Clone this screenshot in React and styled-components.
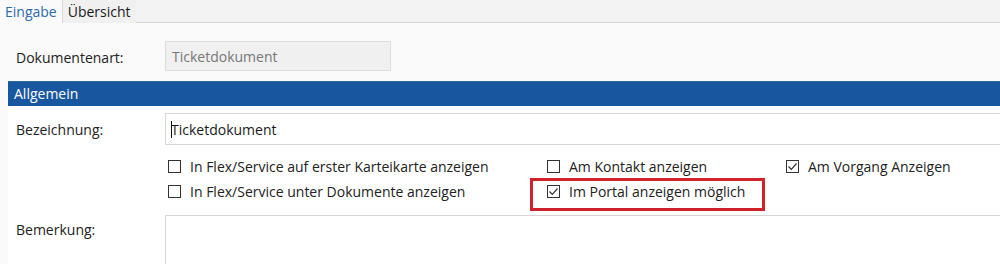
import React from 'react';
import styled, { createGlobalStyle } from 'styled-components';

const Global = createGlobalStyle`
  html, body { margin: 0; padding: 0; background: #fafafa; }
  body { font-family: "Open Sans", "Noto Sans", sans-serif; font-size: 13px; color: #222; }
`;

const Page = styled.div`
  width: 1000px;
  height: 264px;
  overflow: hidden;
  background: #fafafa;
`;

const TabBar = styled.div`
  display: flex;
  height: 23px;
  background: #f3f3f3;
  border-bottom: 1px solid #d4d4d4;
  box-sizing: border-box;
`;

const Tab = styled.div`
  display: flex;
  align-items: center;
  padding: 0 5px;
  font-size: 14px;
  line-height: 1;
  color: ${p => (p.$active ? '#2a6bb0' : '#1a1a1a')};
  background: ${p => (p.$active ? '#fafafa' : '#f0f0f0')};
  border-left: ${p => (p.$active ? 'none' : '1px solid #d8d8d8')};
  height: ${p => (p.$active ? '24px' : '23px')};
  box-sizing: border-box;
`;

const TopRow = styled.div`
  display: flex;
  align-items: center;
  height: 32px;
  margin-top: 17px;
  margin-bottom: -1px;
  padding-left: 16px;
`;

const Label = styled.div`
  width: 149px;
  font-size: 14px;
  line-height: 1;
  color: #222;
  padding-top: ${p => p.$pt || 0}px;
`;

const ReadOnly = styled.div`
  width: 226px;
  height: 30px;
  box-sizing: border-box;
  background: #f0f0f0;
  border: 1px solid #dcdcdc;
  display: flex;
  align-items: center;
  padding: 2px 0 0 6px;
  color: #777;
  font-size: 14px;
  line-height: 1;
`;

const Section = styled.div`
  margin-top: 10px;
  margin-left: 8px;
  background: #ffffff;
`;

const SectionHead = styled.div`
  height: 25px;
  background: #1857a0;
  border-top: 1px solid #2d6a9c;
  box-sizing: border-box;
  color: #fff;
  font-size: 14px;
  line-height: 1;
  display: flex;
  align-items: center;
  padding-left: 6px;
`;

const Row = styled.div`
  display: flex;
  align-items: ${p => (p.$top ? 'flex-start' : 'center')};
  padding-left: 8px;
  margin-top: ${p => p.$mt || 0}px;
`;

const Input = styled.div`
  flex: 1;
  height: ${p => p.$h || 32}px;
  box-sizing: border-box;
  border: 1px solid #d6d6d6;
  border-right: none;
  background: #fff;
  display: flex;
  align-items: center;
  padding: 1px 0 0 5px;
  font-size: 14px;
  line-height: 1;
  color: #1a1a1a;
`;

const Caret = styled.span`
  display: inline-block;
  width: 1px;
  height: 17px;
  background: #111;
  margin-right: -1px;
`;

const Grid = styled.div`
  display: grid;
  grid-template-columns: 379px 239px 1fr;
  grid-auto-rows: 25px;
  margin-left: 160px;
  margin-top: 9px;
`;

const Check = styled.div`
  display: flex;
  align-items: center;
  gap: 9px;
  font-size: 14px;
  line-height: 1;
  color: #222;
  position: relative;
`;

const Box = styled.span`
  width: 13px;
  height: 13px;
  box-sizing: border-box;
  border: 1px solid #333;
  background: #fff;
  display: flex;
  align-items: center;
  justify-content: center;
`;

const Highlight = styled.div`
  position: absolute;
  left: -17px;
  top: -1px;
  width: 235px;
  height: 33px;
  box-sizing: border-box;
  border: 3px solid #d0222b;
  pointer-events: none;
`;

const CheckBox = ({ checked, label, mark }) => (
  <Check>
    <Box>
      {checked && (
        <svg width="11" height="11" viewBox="0 0 11 11">
          <path d="M1.5 5.5 L4.3 8.3 L9.5 2.5" fill="none" stroke="#333" strokeWidth="1.2" />
        </svg>
      )}
    </Box>
    <span>{label}</span>
    {mark && <Highlight />}
  </Check>
);

export default function App() {
  return (
    <Page>
      <Global />
      <TabBar>
        <Tab $active>Eingabe</Tab>
        <Tab>Übersicht</Tab>
      </TabBar>
      <TopRow>
        <Label $pt={3}>Dokumentenart:</Label>
        <ReadOnly>Ticketdokument</ReadOnly>
      </TopRow>
      <Section>
        <SectionHead>Allgemein</SectionHead>
        <Row $mt={7}>
          <Label $pt={1}>Bezeichnung:</Label>
          <Input><Caret />Ticketdokument</Input>
        </Row>
        <Grid>
          <CheckBox label="In Flex/Service auf erster Karteikarte anzeigen" />
          <CheckBox label="Am Kontakt anzeigen" />
          <CheckBox checked label="Am Vorgang Anzeigen" />
          <CheckBox label="In Flex/Service unter Dokumente anzeigen" />
          <CheckBox checked mark label="Im Portal anzeigen möglich" />
        </Grid>
        <Row $top $mt={11}>
          <Label $pt={8}>Bemerkung:</Label>
          <Input $h={60} />
        </Row>
      </Section>
    </Page>
  );
}
